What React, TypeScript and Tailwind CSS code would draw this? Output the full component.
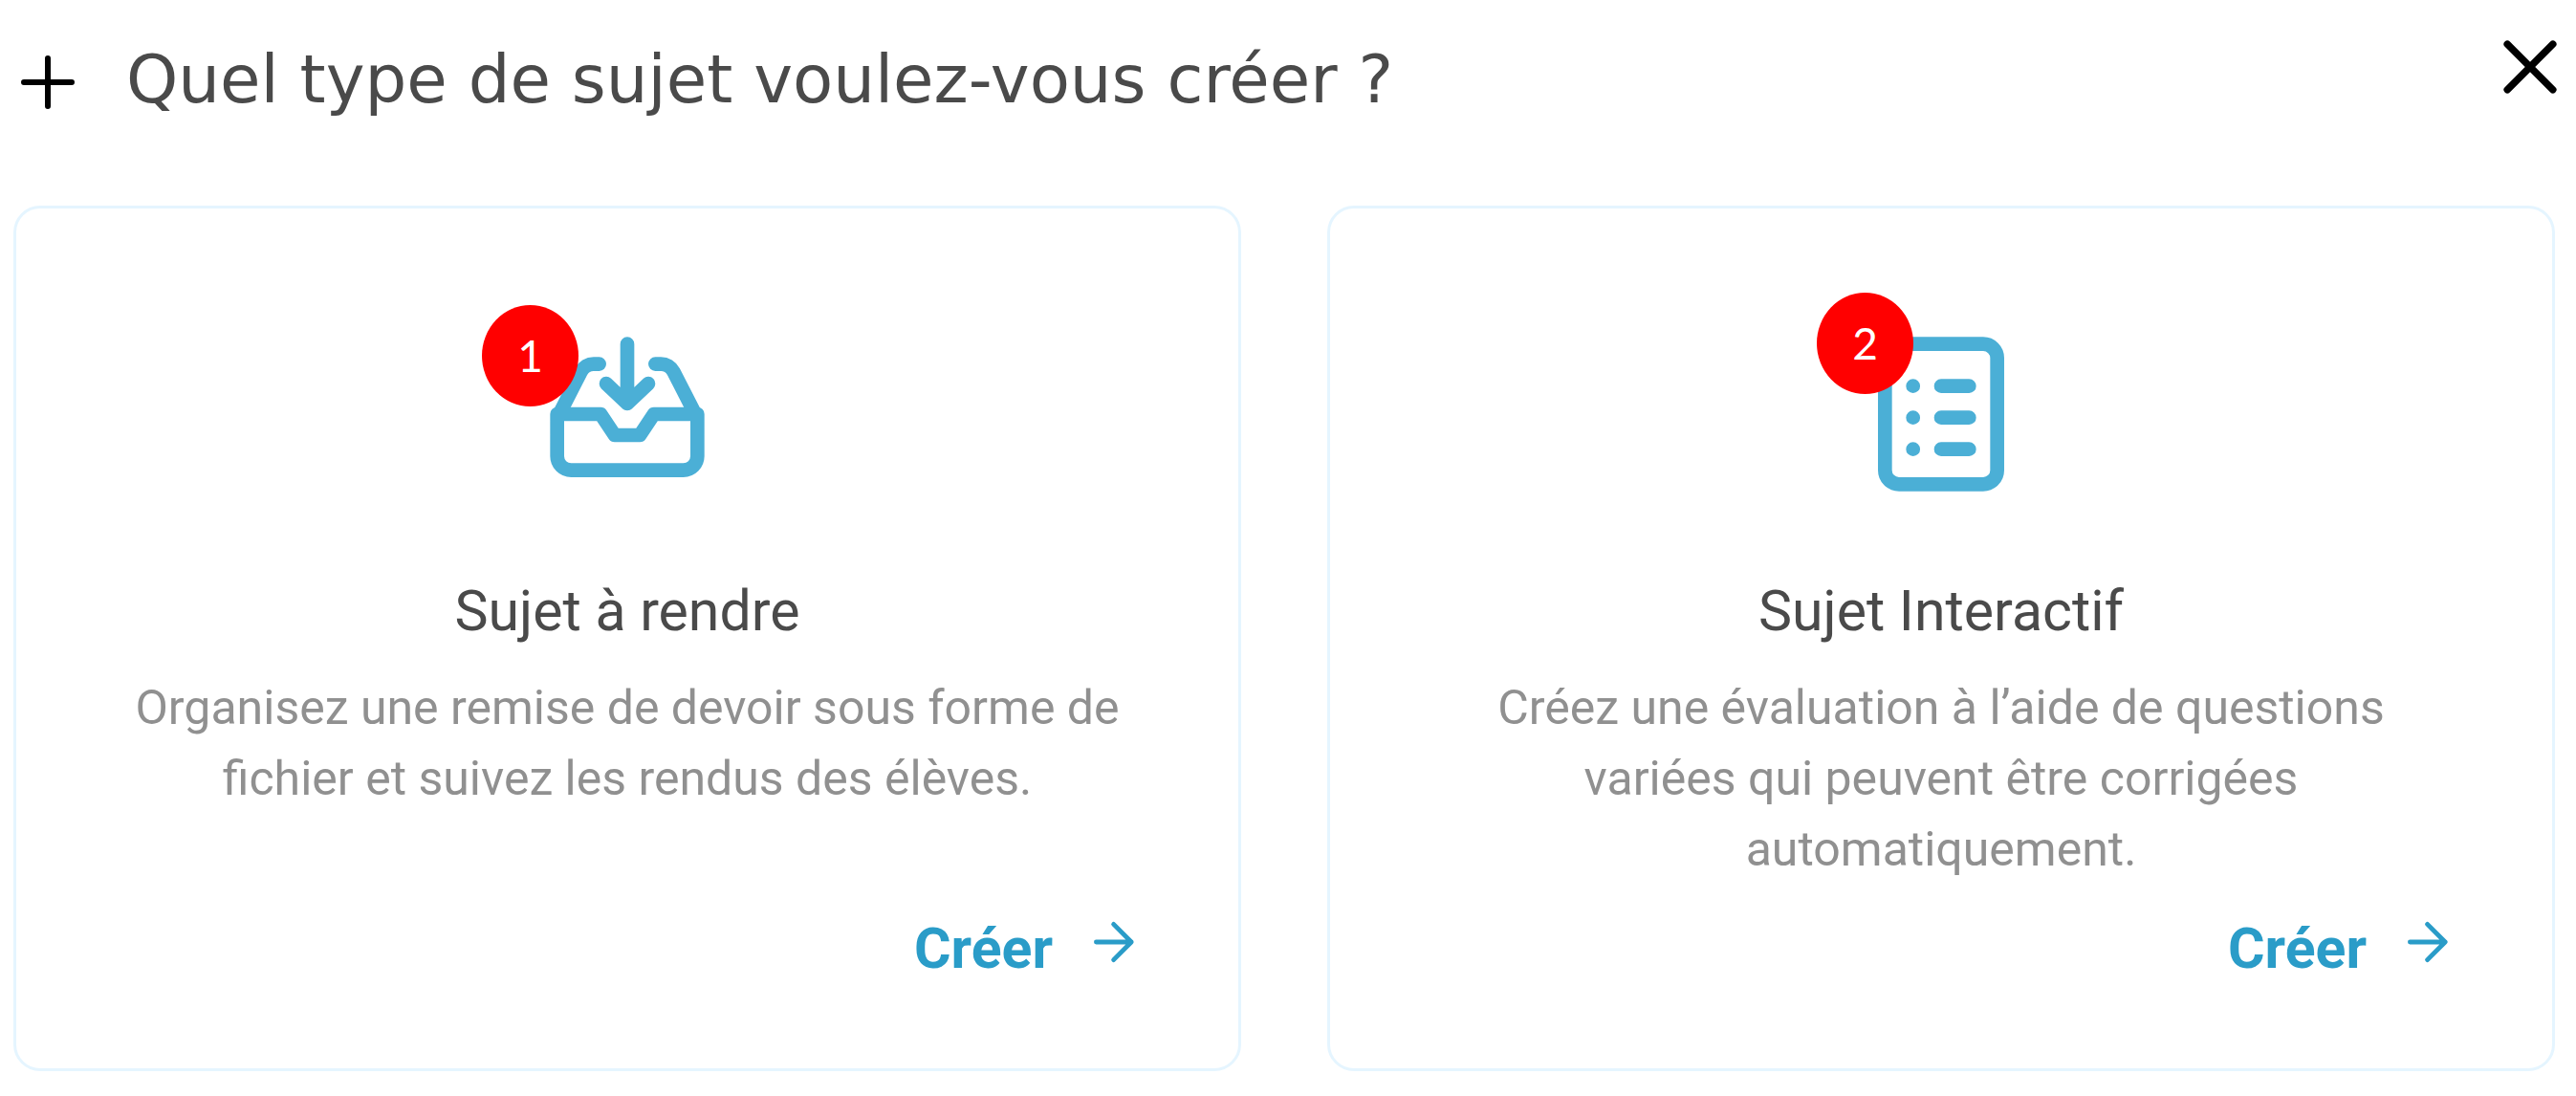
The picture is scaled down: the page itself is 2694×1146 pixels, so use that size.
import type { ReactNode } from "react";

function PlusIcon() {
  return (
    <svg viewBox="0 0 56 56" className="size-14 shrink-0" fill="none" stroke="#000" strokeWidth="6" strokeLinecap="round" aria-hidden="true">
      <path d="M28 3v50M3 28h50" />
    </svg>
  );
}

function CloseIcon() {
  return (
    <svg viewBox="0 0 56 56" className="size-14" fill="none" stroke="#000" strokeWidth="7.5" strokeLinecap="round" aria-hidden="true">
      <path d="M4.2 4.2l47.6 47.6M51.8 4.2L4.2 51.8" />
    </svg>
  );
}

function ArrowIcon() {
  return (
    <svg viewBox="0 0 56 56" className="size-14" fill="none" stroke="currentColor" strokeWidth="4.8" strokeLinecap="round" strokeLinejoin="round" aria-hidden="true">
      <path d="M9.4 28h36.8M27.6 9.4L46.2 28L27.6 46.6" />
    </svg>
  );
}

function InboxIcon() {
  return (
    <svg viewBox="0 0 24 24" className="size-44" fill="none" stroke="#4bafd6" strokeWidth="2" strokeLinecap="round" strokeLinejoin="round" aria-hidden="true">
      <path d="M12 2v8.5M9 7.65l3 2.85l3-2.85" />
      <path d="M8 4.85h-.8c-.76 0-1.45.43-1.8 1.1L2.4 11.8" />
      <path d="M16 4.85h.8c.76 0 1.45.43 1.8 1.1L21.6 11.8" />
      <path d="M2 12h6.2l2 3h3.6l2-3H22v6a2 2 0 0 1-2 2H4a2 2 0 0 1-2-2z" />
    </svg>
  );
}

function ListIcon() {
  return (
    <svg viewBox="0 0 24 24" className="size-44" fill="none" stroke="#4bafd6" strokeWidth="2" strokeLinecap="round" strokeLinejoin="round" aria-hidden="true">
      <rect x="4" y="2" width="16" height="20" rx="2" />
      <path d="M8 8h.01M8 12.5h.01M8 17h.01M12 8h4M12 12.5h4M12 17h4" />
    </svg>
  );
}

type CardProps = {
  icon: ReactNode;
  badge: ReactNode;
  title: string;
  description: string;
};

function SubjectCard({ icon, badge, title, description }: CardProps) {
  return (
    <section className="flex flex-col items-center rounded-[28px] border-3 border-[#e5f5ff] px-[102px] pt-[127px] pb-[90px]">
      <div className="relative">
        {icon}
        {badge}
      </div>
      <h2 className="mt-[84px] text-center text-[59px] leading-[68px] text-[#4a4a4a]">{title}</h2>
      <p className="mt-[30px] flex-1 text-center text-[50px] leading-[74px] text-[#909090]">{description}</p>
      <button type="button" className="mt-8 flex cursor-pointer items-start gap-9 self-end text-[59px] leading-[70px] font-bold text-[#2a9cc8]">
        Créer
        <ArrowIcon />
      </button>
    </section>
  );
}

export default function App() {
  return (
    <main className="bg-white font-[Roboto,sans-serif]">
      <header className="flex items-start justify-between pt-[42px] pr-5 pb-[101px] pl-[22px]">
        <div className="flex items-end gap-[54px] pt-2.5">
          <PlusIcon />
          <h1 className="font-['DejaVu_Sans',sans-serif] text-[69px] leading-[62px] text-[#4a4a4a]">
            Quel type de sujet voulez-vous créer ?
          </h1>
        </div>
        <button type="button" aria-label="Fermer" className="cursor-pointer">
          <CloseIcon />
        </button>
      </header>
      <div className="grid grid-cols-2 gap-[90px] pr-[22px] pb-[26px] pl-3.5">
        <SubjectCard
          icon={<InboxIcon />}
          badge={
            <span className="absolute -top-[26px] -left-16 flex h-[106px] w-[101px] items-center justify-center rounded-[50%] bg-[#ff0000] font-[Lato,sans-serif] text-[46px] leading-none text-white">
              1
            </span>
          }
          title="Sujet à rendre"
          description="Organisez une remise de devoir sous forme de fichier et suivez les rendus des élèves."
        />
        <SubjectCard
          icon={<ListIcon />}
          badge={
            <span className="absolute -top-[39px] -left-[42px] flex h-[106px] w-[101px] items-center justify-center rounded-[50%] bg-[#ff0000] font-[Lato,sans-serif] text-[46px] leading-none text-white">
              2
            </span>
          }
          title="Sujet Interactif"
          description="Créez une évaluation à l’aide de questions variées qui peuvent être corrigées automatiquement."
        />
      </div>
    </main>
  );
}
